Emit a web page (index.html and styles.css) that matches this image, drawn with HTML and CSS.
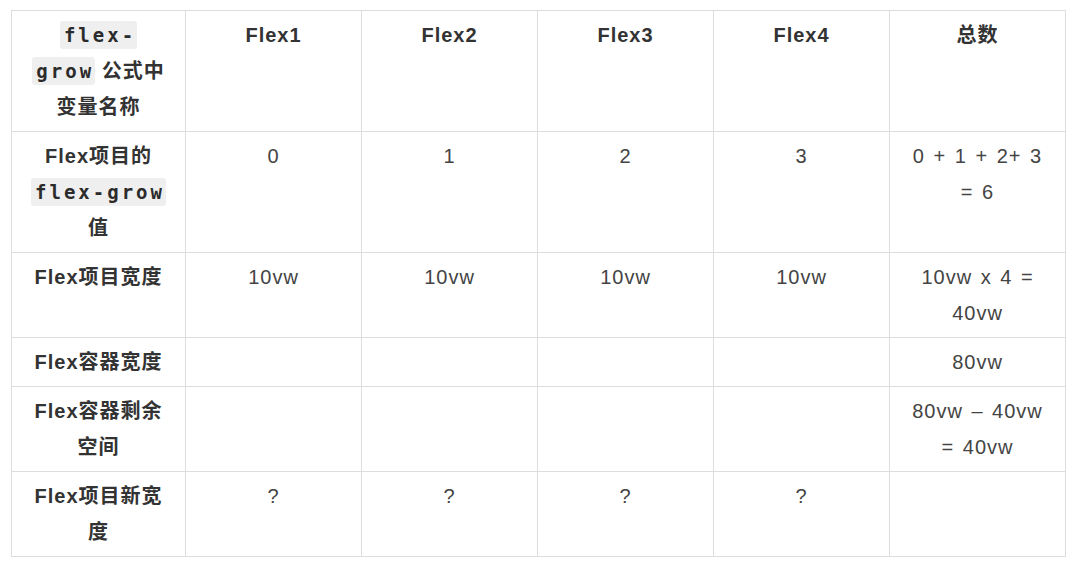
FILE: index.html
```html
<!DOCTYPE html>
<html lang="zh">
<head>
<meta charset="utf-8">
<link rel="stylesheet" href="styles.css">
</head>
<body>
<table class="grid">
  <colgroup>
    <col class="c0"><col class="c1"><col class="c2"><col class="c3"><col class="c4"><col class="c5">
  </colgroup>
  <thead>
    <tr>
      <th><code>flex-</code><br><code>grow</code> 公式中<br>变量名称</th>
      <th>Flex1</th>
      <th>Flex2</th>
      <th>Flex3</th>
      <th>Flex4</th>
      <th>总数</th>
    </tr>
  </thead>
  <tbody>
    <tr>
      <th>Flex项目的<br><code>flex-grow</code><br>值</th>
      <td>0</td><td>1</td><td>2</td><td>3</td>
      <td class="total">0 + 1 + 2+ 3<br>= 6</td>
    </tr>
    <tr>
      <th>Flex项目宽度</th>
      <td>10vw</td><td>10vw</td><td>10vw</td><td>10vw</td>
      <td class="total">10vw x 4 =<br>40vw</td>
    </tr>
    <tr>
      <th>Flex容器宽度</th>
      <td></td><td></td><td></td><td></td>
      <td class="total">80vw</td>
    </tr>
    <tr>
      <th>Flex容器剩余<br>空间</th>
      <td></td><td></td><td></td><td></td>
      <td class="total">80vw – 40vw<br>= 40vw</td>
    </tr>
    <tr>
      <th>Flex项目新宽<br>度</th>
      <td>?</td><td>?</td><td>?</td><td>?</td>
      <td class="total"></td>
    </tr>
  </tbody>
</table>
</body>
</html>
```

FILE: styles.css
```css
html, body {
  margin: 0;
  background: #ffffff;
}
body {
  padding: 10px 0 0 11px;
  font-family: "Liberation Sans", "Noto Sans CJK SC", sans-serif;
  color: #333333;
}
.grid {
  border-collapse: collapse;
  table-layout: fixed;
  width: 1054px;
  font-size: 20px;
  line-height: 36px;
  letter-spacing: 1px;
}
.c0 { width: 174px; }
.c1, .c2, .c3, .c4, .c5 { width: 176px; }
.grid th,
.grid td {
  border: 1px solid #dddddd;
  padding: 6px 12px;
  vertical-align: top;
  text-align: center;
}
.grid th {
  font-weight: 700;
  color: #333333;
}
.grid td {
  font-weight: 400;
  color: #444444;
}
.grid .total {
  word-spacing: 2px;
}
.grid code {
  font-family: "DejaVu Sans Mono", "Liberation Mono", monospace;
  font-weight: 700;
  font-size: 19px;
  line-height: 1;
  letter-spacing: 3px;
  word-spacing: 0;
  background: #efefef;
  border-radius: 3px;
  padding: 3px 1px 3px 4px;
  color: #2b2b2b;
}
```
